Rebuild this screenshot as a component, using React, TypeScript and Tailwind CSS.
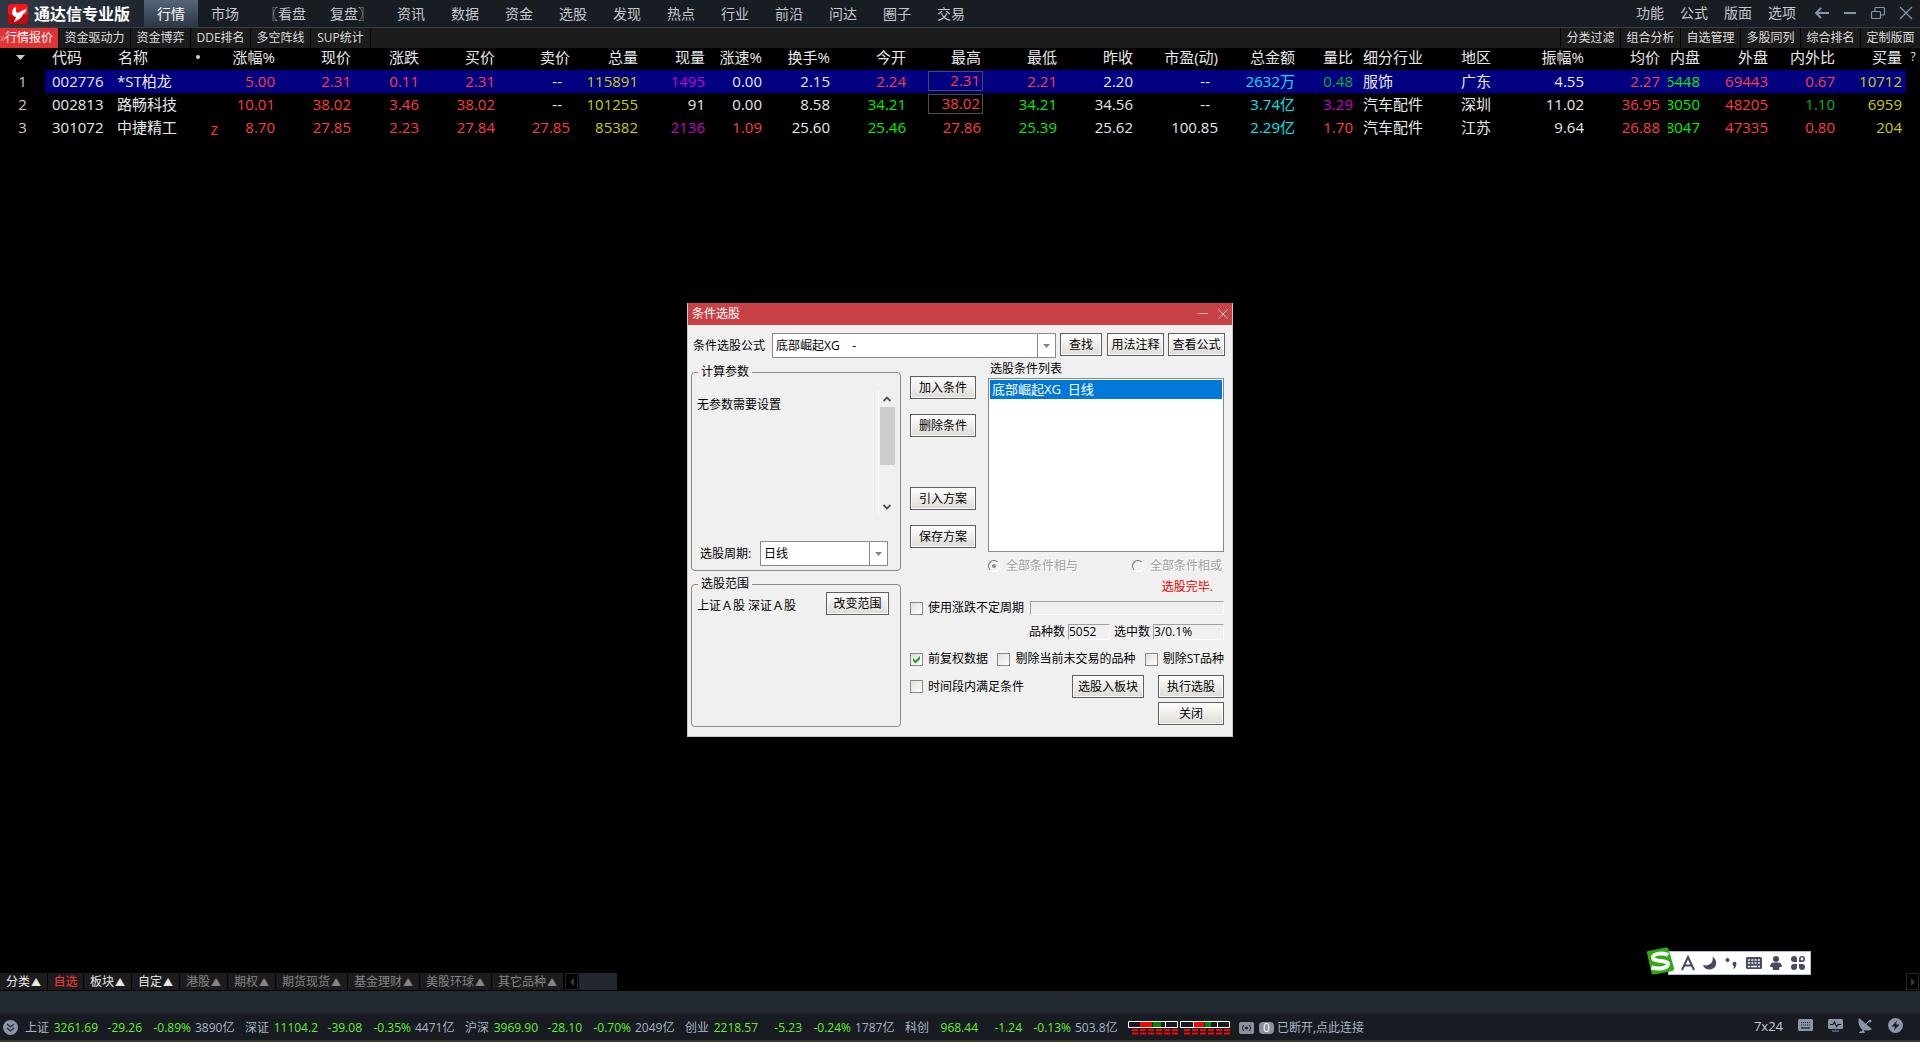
import type { ReactNode } from "react";

const WHITE = "text-[#e8e8e8]";
const RED = "text-[#ff3c3c]";
const GREEN = "text-[#00ee00]";
const DARK_GREEN = "text-[#00b428]";
const YELLOW = "text-[#cccc00]";
const PURPLE = "text-[#c800c8]";
const CYAN = "text-[#00e6f0]";

const menus = ["市场", "〖看盘", "复盘〗", "资讯", "数据", "资金", "选股", "发现", "热点", "行业", "前沿", "问达", "圈子", "交易"];
const quoteTabs = ["资金驱动力", "资金博弈", "DDE排名", "多空阵线", "SUP统计"];
const toolTabs = ["分类过滤", "组合分析", "自选管理", "多股同列", "综合排名", "定制版面"];

type Column = { label: string; width: string; cell: string };

const columns: Column[] = [
  { label: "涨幅%", width: "w-[55px]", cell: "pr-0.5 text-right" },
  { label: "现价", width: "w-[76px]", cell: "pr-0.5 text-right" },
  { label: "涨跌", width: "w-[68px]", cell: "pr-0.5 text-right" },
  { label: "买价", width: "w-[76px]", cell: "pr-0.5 text-right" },
  { label: "卖价", width: "w-[75px]", cell: "pr-0.5 text-right" },
  { label: "总量", width: "w-[68px]", cell: "pr-0.5 text-right" },
  { label: "现量", width: "w-[67px]", cell: "pr-0.5 text-right" },
  { label: "涨速%", width: "w-[57px]", cell: "pr-0.5 text-right" },
  { label: "换手%", width: "w-[68px]", cell: "pr-0.5 text-right" },
  { label: "今开", width: "w-[76px]", cell: "pr-0.5 text-right" },
  { label: "最高", width: "w-[75px]", cell: "pr-0.5 text-right" },
  { label: "最低", width: "w-[76px]", cell: "pr-0.5 text-right" },
  { label: "昨收", width: "w-[76px]", cell: "pr-0.5 text-right" },
  { label: "市盈(动)", width: "w-[85px]", cell: "pr-0.5 text-right" },
  { label: "总金额", width: "w-[77px]", cell: "pr-0.5 text-right" },
  { label: "量比", width: "w-[58px]", cell: "pr-0.5 text-right" },
  { label: "细分行业", width: "w-[98px]", cell: "pl-2 text-left" },
  { label: "地区", width: "w-[57px]", cell: "pl-2 text-left" },
  { label: "振幅%", width: "w-[76px]", cell: "pr-0.5 text-right" },
  { label: "均价", width: "w-[76px]", cell: "pr-0.5 text-right" },
  { label: "内盘", width: "w-[40px]", cell: "pl-1.5 pr-0.5 text-right" },
  { label: "外盘", width: "w-[68px]", cell: "pr-0.5 text-right" },
  { label: "内外比", width: "w-[67px]", cell: "pr-0.5 text-right" },
  { label: "买量", width: "w-[69px]", cell: "pr-1 text-right" },
];

type Stock = { code: string; name: string; mark?: string; active?: boolean; cells: [string, string][] };

const stocks: Stock[] = [
  {
    code: "002776",
    name: "*ST柏龙",
    active: true,
    cells: [
      ["5.00", RED], ["2.31", RED], ["0.11", RED], ["2.31", RED], ["--", WHITE], ["115891", YELLOW],
      ["1495", PURPLE], ["0.00", WHITE], ["2.15", WHITE], ["2.24", RED], ["2.31", RED], ["2.21", RED],
      ["2.20", WHITE], ["--", WHITE], ["2632万", CYAN], ["0.48", DARK_GREEN], ["服饰", WHITE], ["广东", WHITE],
      ["4.55", WHITE], ["2.27", RED], ["46448", GREEN], ["69443", RED], ["0.67", RED], ["10712", YELLOW],
    ],
  },
  {
    code: "002813",
    name: "路畅科技",
    cells: [
      ["10.01", RED], ["38.02", RED], ["3.46", RED], ["38.02", RED], ["--", WHITE], ["101255", YELLOW],
      ["91", WHITE], ["0.00", WHITE], ["8.58", WHITE], ["34.21", GREEN], ["38.02", RED], ["34.21", GREEN],
      ["34.56", WHITE], ["--", WHITE], ["3.74亿", CYAN], ["3.29", PURPLE], ["汽车配件", WHITE], ["深圳", WHITE],
      ["11.02", WHITE], ["36.95", RED], ["53050", GREEN], ["48205", RED], ["1.10", DARK_GREEN], ["6959", YELLOW],
    ],
  },
  {
    code: "301072",
    name: "中捷精工",
    mark: "z",
    cells: [
      ["8.70", RED], ["27.85", RED], ["2.23", RED], ["27.84", RED], ["27.85", RED], ["85382", YELLOW],
      ["2136", PURPLE], ["1.09", RED], ["25.60", WHITE], ["25.46", GREEN], ["27.86", RED], ["25.39", GREEN],
      ["25.62", WHITE], ["100.85", WHITE], ["2.29亿", CYAN], ["1.70", RED], ["汽车配件", WHITE], ["江苏", WHITE],
      ["9.64", WHITE], ["26.88", RED], ["38047", GREEN], ["47335", RED], ["0.80", RED], ["204", YELLOW],
    ],
  },
];

const marketTabs = [
  { label: "分类", arrow: true, style: "w-[47px] text-[#e8e8e8]" },
  { label: "自选", arrow: false, style: "w-[35px] text-[#ff3838]" },
  { label: "板块", arrow: true, style: "w-[47px] text-[#e8e8e8]" },
  { label: "自定", arrow: true, style: "w-[47px] text-[#e8e8e8]" },
  { label: "港股", arrow: true, style: "w-[47px] text-[#848484]" },
  { label: "期权", arrow: true, style: "w-[47px] text-[#848484]" },
  { label: "期货现货", arrow: true, style: "w-[71px] text-[#848484]" },
  { label: "基金理财", arrow: true, style: "w-[71px] text-[#848484]" },
  { label: "美股环球", arrow: true, style: "w-[71px] text-[#848484]" },
  { label: "其它品种", arrow: true, style: "w-[71px] text-[#848484]" },
];

const indexes = [
  ["上证", "3261.69", "-29.26", "-0.89%", "3890亿"],
  ["深证", "11104.2", "-39.08", "-0.35%", "4471亿"],
  ["沪深", "3969.90", "-28.10", "-0.70%", "2049亿"],
  ["创业", "2218.57", "-5.23", "-0.24%", "1787亿"],
  ["科创", "968.44", "-1.24", "-0.13%", "503.8亿"],
];

function Logo() {
  return (
    <svg className="h-5 w-5" viewBox="0 0 20 20">
      <rect width="20" height="20" rx="3" fill="#c8060c" />
      <rect width="20" height="11" rx="3" fill="#f01818" />
      <path
        d="M8 2.500C5 4 3.500 7.500 4.200 10 5 12 6.500 12.800 8.200 12.800L6 18C11 16 14.500 13.500 14.800 10.300 17 9.500 18.300 7.500 18.500 4.500 16.500 6 13.500 6.500 11.800 8 10.500 9 8.500 9 8 7.500 7.600 6 8.500 4.500 8 2.500z"
        fill="#fff"
      />
    </svg>
  );
}

function TitleBar() {
  return (
    <header className="flex h-7 items-stretch border-b border-[#333d4b] bg-[#181c23] text-sm text-[#c3c8cf]">
      <div className="flex w-36 items-center gap-1.5 bg-linear-to-r from-[#303844] to-[#20262f] pl-2">
        <Logo />
        <h1 className="text-base font-bold whitespace-nowrap text-white">通达信专业版</h1>
      </div>
      <nav className="flex">
        <button className="w-[54px] bg-linear-to-b from-[#566579] to-[#2d3743] text-white">行情</button>
        {menus.map((item) => (
          <button key={item} className={item.length === 3 ? "w-[66px]" : "w-[54px]"}>
            {item}
          </button>
        ))}
      </nav>
      <div className="ml-auto flex items-center gap-4 pr-1.5 pb-0.5">
        <button>功能</button>
        <button>公式</button>
        <button>版面</button>
        <button>选项</button>
        <div className="ml-0.5 flex items-center gap-3 text-[#8595ad]">
          <button aria-label="后退">
            <svg className="h-4 w-4" viewBox="0 0 16 16" fill="none" stroke="currentColor" strokeWidth="1.800">
              <path d="M15 8H2M7 3L2 8l5 5" />
            </svg>
          </button>
          <button aria-label="最小化">
            <svg className="h-4 w-4" viewBox="0 0 16 16" stroke="currentColor" strokeWidth="2">
              <path d="M2 8h12" />
            </svg>
          </button>
          <button aria-label="还原">
            <svg className="h-4 w-4" viewBox="0 0 16 16" fill="none" stroke="currentColor" strokeWidth="1.200">
              <rect x="1.500" y="6.500" width="9" height="7" rx="1" />
              <path d="M5 6V3.500a1 1 0 0 1 1-1h7.500a1 1 0 0 1 1 1V9a1 1 0 0 1-1 1H11" />
            </svg>
          </button>
          <button aria-label="关闭程序">
            <svg className="h-4 w-4" viewBox="0 0 16 16" stroke="currentColor" strokeWidth="1.300">
              <path d="M2 2l12 12M14 2L2 14" />
            </svg>
          </button>
        </div>
      </div>
    </header>
  );
}

function QuoteTabs() {
  return (
    <nav className="flex h-5 items-stretch bg-[#1c1c1d] text-xs text-[#dedede]">
      <button className="relative border-r border-black bg-[#e23232] px-[5px] text-white">
        <span className="absolute left-0 text-[#f09090]">»</span>
        <span className="relative">行情报价</span>
      </button>
      {quoteTabs.map((tab) => (
        <button key={tab} className={`border-r border-black ${tab === "资金驱动力" ? "w-[72px]" : "w-[60px]"}`}>
          {tab}
        </button>
      ))}
      <div className="ml-auto flex">
        {toolTabs.map((tab) => (
          <button key={tab} className="w-[60px] border-l border-black">
            {tab}
          </button>
        ))}
      </div>
    </nav>
  );
}

function Cell({ column, text, color, boxed }: { column: Column; text: string; color: string; boxed: boolean }) {
  if (boxed) {
    return (
      <td className={color}>
        <div className="ml-auto h-5 w-[55px] border border-[#4c4c4c] pr-0.5 text-right leading-[17px]">{text}</div>
      </td>
    );
  }
  // narrow column, the leading digit is cut off
  if (column.label === "内盘") {
    return (
      <td className={`${column.cell} ${color}`}>
        <div className="flex justify-end overflow-hidden">{text}</div>
      </td>
    );
  }
  return <td className={`${text === "--" ? "pr-2.5 text-right" : column.cell} ${color}`}>{text}</td>;
}

function QuoteTable() {
  return (
    <table className="w-full table-fixed border-collapse text-[15px] leading-5 whitespace-nowrap text-[#e8e8e8] [&_td]:pb-0.5 [&_th]:pb-1 [&_th]:leading-[18px]">
      <colgroup>
        <col className="w-[45px]" />
        <col className="w-[65px]" />
        <col className="w-[112px]" />
        {columns.map((c) => (
          <col key={c.label} className={c.width} />
        ))}
        <col className="w-[14px]" />
      </colgroup>
      <thead>
        <tr className="h-[22px]">
          <th>
            <svg className="ml-4 h-[5px] w-[9px]" viewBox="0 0 9 5">
              <path d="M0 0h9L4.500 5z" fill="#c8c8c8" />
            </svg>
          </th>
          <th className="pl-[7px] text-left font-normal">代码</th>
          <th className="pl-2 font-normal">
            <div className="flex items-center justify-between pr-[22px]">
              名称
              <span className="h-1 w-1 rounded-full bg-[#d0d0d0]" />
            </div>
          </th>
          {columns.map((c) => (
            <th key={c.label} className={`font-normal ${c.cell}`}>
              {c.label}
            </th>
          ))}
          <th className="text-xs font-normal">?</th>
        </tr>
      </thead>
      <tbody>
        {stocks.map((s, i) => (
          <tr key={s.code} className="h-[23px]">
            <td className="text-center text-[#dfc49c]">{i + 1}</td>
            <td className={s.active ? "bg-[#000080] pl-[7px]" : "pl-[7px]"}>{s.code}</td>
            <td className={s.active ? "bg-[#000080] pl-[7px]" : "pl-[7px]"}>
              <div className="flex items-end justify-between pr-1">
                {s.name}
                {s.mark && <span className="text-base leading-4 text-[#ff3838]">{s.mark}</span>}
              </div>
            </td>
            {s.cells.map(([text, color], j) => (
              <Cell
                key={j}
                column={columns[j]}
                text={text}
                color={s.active ? `bg-[#000080] ${color}` : color}
                boxed={columns[j].label === "最高" && i < 2}
              />
            ))}
            <td />
          </tr>
        ))}
      </tbody>
    </table>
  );
}

function DialogButton({ children, className = "" }: { children: ReactNode; className?: string }) {
  return (
    <button
      className={`h-[23px] shrink-0 border border-[#606060] bg-linear-to-b from-white to-[#dddbd5] pt-px text-center leading-5 whitespace-nowrap inset-ring inset-ring-[#f8f8f8] ${className}`}
    >
      {children}
    </button>
  );
}

function ComboBox({ id, options, className }: { id: string; options: string[]; className: string }) {
  return (
    <div className={`relative flex h-[25px] border border-[#8a8a8a] bg-white ${className}`}>
      <select id={id} className="min-w-0 flex-1 appearance-none pt-px pl-[3px] whitespace-pre outline-none">
        {options.map((o) => (
          <option key={o}>{o}</option>
        ))}
      </select>
      <span className="pointer-events-none flex w-[18px] items-center justify-center border-l border-[#8a8a8a]">
        <svg className="h-1 w-[7px]" viewBox="0 0 7 4">
          <path d="M0 0h7L3.500 4z" fill="#848484" />
        </svg>
      </span>
    </div>
  );
}

function CheckBox({ label, checked = false }: { label: string; checked?: boolean }) {
  return (
    <label className="flex items-center gap-[5px] whitespace-nowrap">
      <span className="relative flex h-[13px] w-[13px]">
        <input
          type="checkbox"
          defaultChecked={checked}
          className="peer h-[13px] w-[13px] appearance-none border border-[#8a8a8a] bg-linear-to-br from-[#e2dfd8] to-white"
        />
        <svg className="pointer-events-none absolute inset-0 hidden peer-checked:block" viewBox="0 0 13 13">
          <path d="M3 5v3l2.500 2.500L10 6V3L5.500 7.500z" fill="#21a121" />
        </svg>
      </span>
      {label}
    </label>
  );
}

function Radio({ label, checked = false }: { label: string; checked?: boolean }) {
  return (
    <label className="flex items-center gap-1.5 text-[#a0a0a0] [text-shadow:1px_1px_0_white]">
      <span className="relative flex h-3 w-3">
        <input
          type="radio"
          name="combine"
          disabled
          defaultChecked={checked}
          className="peer h-3 w-3 appearance-none rounded-full border border-t-[#707070] border-r-white border-b-white border-l-[#707070]"
        />
        <span className="absolute top-1 left-1 hidden h-1 w-1 rounded-full bg-[#8a8a8a] peer-checked:block" />
      </span>
      {label}
    </label>
  );
}

function ScrollColumn() {
  return (
    <div className="flex h-[125px] w-[17px] flex-col items-center border-l border-white">
      <svg className="mt-1.5 h-[6px] w-2" viewBox="0 0 8 6" fill="none" stroke="#505050" strokeWidth="1.800">
        <path d="M.5 5L4 1.500 7.500 5" />
      </svg>
      <div className="mt-[5px] h-[58px] w-[15px] bg-[#cdcdcd]" />
      <svg className="mt-auto mb-[5px] h-[6px] w-2" viewBox="0 0 8 6" fill="none" stroke="#505050" strokeWidth="1.800">
        <path d="M.5 1L4 4.500 7.500 1" />
      </svg>
    </div>
  );
}

function FilterDialog() {
  return (
    <section className="w-[546px] border border-t-0 border-[#c8c8c8] bg-[#f0f0f0] text-xs leading-4 text-black">
      <div className="flex h-[22px] items-center justify-between bg-[#c84146] pr-[3px] pl-1 text-white">
        <h2>条件选股</h2>
        <div className="flex gap-2">
          <button aria-label="最小化窗口">
            <svg className="h-3 w-3" viewBox="0 0 12 12" stroke="#e8b8ba">
              <path d="M1 5.500h10" />
            </svg>
          </button>
          <button aria-label="关闭窗口">
            <svg className="h-3 w-3" viewBox="0 0 12 12" stroke="#f0cccd">
              <path d="M1.500 1.500l9 9M10.500 1.500l-9 9" />
            </svg>
          </button>
        </div>
      </div>

      <div className="flex items-start pt-2 pr-[7px] pl-[5px]">
        <label htmlFor="formula" className="w-[79px] pt-[5px]">
          条件选股公式
        </label>
        <ComboBox id="formula" options={["底部崛起XG\u00a0\u00a0\u00a0\u00a0-"]} className="w-[284px]" />
        <DialogButton className="ml-1 w-[42px]">查找</DialogButton>
        <DialogButton className="ml-[5px] w-[57px]">用法注释</DialogButton>
        <DialogButton className="ml-1 w-[57px]">查看公式</DialogButton>
      </div>

      <div className="flex items-start gap-[9px] pr-2 pb-[9px] pl-[3px]">
        <div className="w-[210px]">
          <fieldset className="mt-1.5 h-[207px] rounded border border-[#8a8a8a]">
            <legend className="ml-1.5 px-[3px]">计算参数</legend>
            <div className="mt-[10px] flex justify-between pr-[5px] pl-[5px]">
              <p className="mt-[7px]">无参数需要设置</p>
              <ScrollColumn />
            </div>
            <div className="mt-[26px] flex items-center pl-2">
              <label htmlFor="period" className="w-[60px]">
                选股周期:
              </label>
              <ComboBox id="period" options={["日线"]} className="w-32" />
            </div>
          </fieldset>
          <fieldset className="mt-[5px] h-[151px] rounded border border-[#8a8a8a]">
            <legend className="ml-1.5 px-[3px]">选股范围</legend>
            <div className="flex justify-between pr-[11px] pl-[5px]">
              <p className="mt-1.5">上证Ａ股 深证Ａ股</p>
              <DialogButton className="w-[63px]">改变范围</DialogButton>
            </div>
          </fieldset>
        </div>

        <div className="flex-1">
          <div className="flex">
            <div className="w-[78px] pt-[18px]">
              <div className="flex flex-col gap-[15px]">
                <DialogButton className="w-[66px]">加入条件</DialogButton>
                <DialogButton className="w-[66px]">删除条件</DialogButton>
              </div>
              <div className="mt-[50px] flex flex-col gap-[15px]">
                <DialogButton className="w-[66px]">引入方案</DialogButton>
                <DialogButton className="w-[66px]">保存方案</DialogButton>
              </div>
            </div>
            <div className="flex-1">
              <h3 className="pt-[3px] pl-0.5">选股条件列表</h3>
              <ul className="mt-px h-[174px] border border-[#8a8a8a] bg-white p-px text-[13px] leading-[19px]">
                <li className="bg-[#0078d7] pl-0.5 whitespace-pre text-white">底部崛起XG  日线</li>
              </ul>
              <div className="mt-1.5 flex justify-between pr-0.5">
                <Radio label="全部条件相与" checked />
                <Radio label="全部条件相或" />
              </div>
            </div>
          </div>

          <p className="mt-[5px] pr-[11px] text-right text-[#e80000]">选股完毕.</p>

          <div className="mt-[5px] flex items-center gap-1.5">
            <CheckBox label="使用涨跌不定周期" />
            <input
              disabled
              aria-label="不定周期"
              className="h-3.5 min-w-0 flex-1 border border-t-[#a0a0a0] border-r-white border-b-white border-l-[#a0a0a0]"
            />
          </div>

          <div className="mt-2 flex items-center justify-end">
            <label htmlFor="total">品种数</label>
            <input
              id="total"
              readOnly
              defaultValue="5052"
              className="ml-[3px] h-4 w-[42px] border border-t-[#a0a0a0] border-r-white border-b-white border-l-[#a0a0a0]"
            />
            <label htmlFor="hits" className="ml-1">
              选中数
            </label>
            <input
              id="hits"
              readOnly
              defaultValue="3/0.1%"
              className="ml-[3px] h-4 w-[71px] border border-t-[#a0a0a0] border-r-white border-b-white border-l-[#a0a0a0]"
            />
          </div>

          <div className="mt-[11px] flex justify-between">
            <CheckBox label="前复权数据" checked />
            <CheckBox label="剔除当前未交易的品种" />
            <CheckBox label="剔除ST品种" />
          </div>

          <div className="mt-2 flex items-center">
            <CheckBox label="时间段内满足条件" />
            <DialogButton className="ml-auto w-[72px]">选股入板块</DialogButton>
            <DialogButton className="ml-3.5 w-[66px]">执行选股</DialogButton>
          </div>
          <div className="mt-1 flex justify-end">
            <DialogButton className="w-[66px]">关闭</DialogButton>
          </div>
        </div>
      </div>
    </section>
  );
}

function InputMethodBar() {
  return (
    <div className="absolute right-[109px] -bottom-0.5 flex items-end">
      <svg className="z-10 h-7 w-7" viewBox="0 0 28 28">
        <path d="M1 6Q.5 4.500 2 4L20 .5q2-.5 2.500 1.500L28 21q.3 2-1.500 3L8.500 27.500q-2.500.5-3-1.500z" fill="#2fab16" />
        <path d="M22 8C18 5.500 7.500 6 7 10.500c-.5 4.500 15 2.500 15 6.500 0 4.500-10 5.500-16.500 3.500" fill="none" stroke="#fff" strokeWidth="4" />
      </svg>
      <div className="-ml-1.5 flex h-6 w-[143px] items-center gap-1.5 border border-[#a8c4d8] bg-white pl-[11px] text-[#454a60]">
        <svg className="h-4 w-4" viewBox="0 0 16 16" fill="none" stroke="currentColor" strokeWidth="2">
          <path d="M2 15L8 2l6 13M4.500 10.500h7" />
        </svg>
        <svg className="h-4 w-4" viewBox="0 0 16 16" fill="currentColor">
          <path d="M10.500 1.500c6 4 4.500 13-3 13-3.500 0-6-2-6.500-4.500 6 2 11-2.500 9.500-8.500z" />
        </svg>
        <svg className="h-4 w-4" viewBox="0 0 16 16" fill="currentColor">
          <circle cx="3.500" cy="5" r="2" />
          <path d="M8.500 8.500a2 2 0 1 1 3.500 1.500c0 2-1 3.500-3 4 .8-1.200 1-2 .8-3-.8-.3-1.300-1.200-1.300-2.500z" />
        </svg>
        <svg className="h-4 w-4" viewBox="0 0 16 16">
          <rect y="2" width="16" height="12" rx="1.500" fill="currentColor" />
          <path d="M2 5h12M2 8h12" stroke="#fff" strokeWidth="1.600" strokeDasharray="2 1.300" />
          <path d="M2 11.500h2M5 11.500h6M12 11.500h2" stroke="#fff" strokeWidth="1.400" />
        </svg>
        <svg className="h-4 w-4" viewBox="0 0 16 16" fill="currentColor">
          <circle cx="8" cy="4" r="3" />
          <path d="M6 7.500h4c2.500 0 4 2 4 4.500h-2.500L11 15H5l-.5-3H2c0-2.500 1.500-4.500 4-4.500z" />
        </svg>
        <svg className="h-4 w-4" viewBox="0 0 16 16" fill="currentColor">
          <circle cx="4" cy="4" r="3" />
          <circle cx="12" cy="4" r="2.200" fill="none" stroke="currentColor" strokeWidth="1.600" />
          <circle cx="4" cy="12" r="3" />
          <circle cx="12" cy="12" r="3" />
          <path d="M4 4h3v3H4zM9 7V5h2v2zM4 9h3v3H4zM9 9h3v3H9z" />
        </svg>
      </div>
    </div>
  );
}

function MarketTabs() {
  return (
    <nav className="flex h-[18px] items-stretch gap-px pb-px text-xs">
      {marketTabs.map((tab) => (
        <button
          key={tab.label}
          className={`flex items-center justify-center gap-px bg-[#1c1c1d] leading-4 whitespace-nowrap ${tab.style}`}
        >
          {tab.label}
          {tab.arrow && <span className="text-[10px]">▲</span>}
        </button>
      ))}
      <button aria-label="向左滚动" className="ml-px flex w-[13px] items-center justify-center border border-[#22262c]">
        <svg className="h-2 w-1" viewBox="0 0 4 8">
          <path d="M4 0v8L0 4z" fill="#343a44" />
        </svg>
      </button>
      <div className="w-[38px] bg-[#222730]" />
      <button aria-label="向右滚动" className="mr-px ml-auto flex w-[13px] items-center justify-center border border-[#22262c]">
        <svg className="h-2 w-1" viewBox="0 0 4 8">
          <path d="M0 0v8l4-4z" fill="#343a44" />
        </svg>
      </button>
    </nav>
  );
}

function BreadthBars() {
  return (
    <svg className="h-[14px] w-[103px]" viewBox="0 0 103 14">
      <rect x="12" y="1" width="12" height="5" fill="#f00" />
      <rect x="25" y="1" width="8" height="5" fill="#008a00" />
      <rect x="66" y="1" width="10" height="5" fill="#f00" />
      <rect x="77" y="1" width="6" height="5" fill="#008a00" />
      <path d="M.5.5h49v6H.5zM37.500 1v5M52.500.5h49v6h-49zM65.500 1v5M89.500 1v5" fill="none" stroke="#fff" />
      <path d="M4 9h46M4 12.500h46M56 9h46M56 12.500h46" stroke="#f00" strokeWidth="2" strokeDasharray="6 2" />
    </svg>
  );
}

function StatusBar() {
  return (
    <footer className="flex h-[29px] items-center border-b-2 border-[#37372a] bg-[#181b22] pt-0.5 pl-[3px] text-xs whitespace-nowrap text-[#a9b3c4]">
      <svg className="h-[15px] w-[15px]" viewBox="0 0 15 15">
        <circle cx="7.500" cy="7.500" r="7.500" fill="#8b95a8" />
        <path d="M4 4l3.500 3L11 4M4 8l3.500 3L11 8" fill="none" stroke="#20252e" strokeWidth="1.200" />
      </svg>
      <div className="ml-[7px] flex">
        {indexes.map(([name, price, change, pct, amount]) => (
          <div key={name} className="grid w-[220px] grid-cols-[28px_45px_44px_49px_1fr] text-right text-[#62f02e]">
            <span className="text-left text-[#a9b3c4]">{name}</span>
            <span>{price}</span>
            <span>{change}</span>
            <span>{pct}</span>
            <span className="pl-1 text-left text-[#a9b3c4]">{amount}</span>
          </div>
        ))}
      </div>
      <div className="ml-[3px] flex items-center">
        <BreadthBars />
        <svg className="ml-2 h-3 w-[15px]" viewBox="0 0 15 12" fill="none" stroke="#181b22">
          <rect width="15" height="12" rx="2" fill="#8b919c" stroke="none" />
          <circle cx="7.500" cy="6" r="1" fill="#181b22" />
          <path d="M4.500 3q-2 3 0 6M10.500 3q2 3 0 6" />
        </svg>
        <span className="ml-[5px] h-3 w-[15px] rounded-sm bg-[#8b919c] text-center leading-3 text-white">0</span>
        <a href="#connect" className="ml-[3px]">
          已断开,点此连接
        </a>
      </div>
      <div className="ml-auto flex items-center gap-[15px] pr-[17px] pb-1 text-[#8b95a8]">
        <span className="text-[13px] leading-4 text-[#c8ccd2]">7x24</span>
        <svg className="h-[15px] w-[15px]" viewBox="0 0 15 15">
          <rect y="1" width="15" height="12" rx="1.500" fill="currentColor" />
          <path d="M3 4.500h9M3 7h9" stroke="#181b22" strokeDasharray="1 1" />
          <path d="M3 10h9" stroke="#181b22" strokeWidth="1.200" />
        </svg>
        <svg className="h-[15px] w-[15px]" viewBox="0 0 15 15" fill="none">
          <rect y="1" width="15" height="10" rx="1.500" fill="currentColor" />
          <path d="M2 6.500h3L6.500 4l2 4.500L10 6.500h3" stroke="#181b22" strokeWidth="1.200" />
          <path d="M4 13h7" stroke="currentColor" />
        </svg>
        <svg className="h-[15px] w-[15px]" viewBox="0 0 15 15" fill="currentColor">
          <path d="M1 0l13 11C9 14 4 12.500 2 9S0 3 1 0zM5 10l2 5H1v-1l3-1z" />
          <path d="M8 6l3.500-3.500" stroke="currentColor" />
          <circle cx="12" cy="3" r="1.500" />
        </svg>
        <svg className="h-[15px] w-[15px]" viewBox="0 0 15 15">
          <circle cx="7.500" cy="7.500" r="7.500" fill="currentColor" />
          <path d="M9 2.500L3.500 8.500h3.500L6 12.500l5.500-6H8z" fill="#181b22" />
        </svg>
      </div>
    </footer>
  );
}

export default function App() {
  return (
    <div className="relative flex min-h-screen flex-col bg-black font-['Open_Sans','Noto_Sans_CJK_SC',sans-serif]">
      <TitleBar />
      <QuoteTabs />
      <main className="relative flex-1">
        <QuoteTable />
        <InputMethodBar />
      </main>
      <MarketTabs />
      <div className="h-[22px] bg-[#222930]" />
      <StatusBar />
      <div className="pointer-events-none absolute inset-0 flex items-center justify-center pb-0.5">
        <div className="pointer-events-auto">
          <FilterDialog />
        </div>
      </div>
    </div>
  );
}
